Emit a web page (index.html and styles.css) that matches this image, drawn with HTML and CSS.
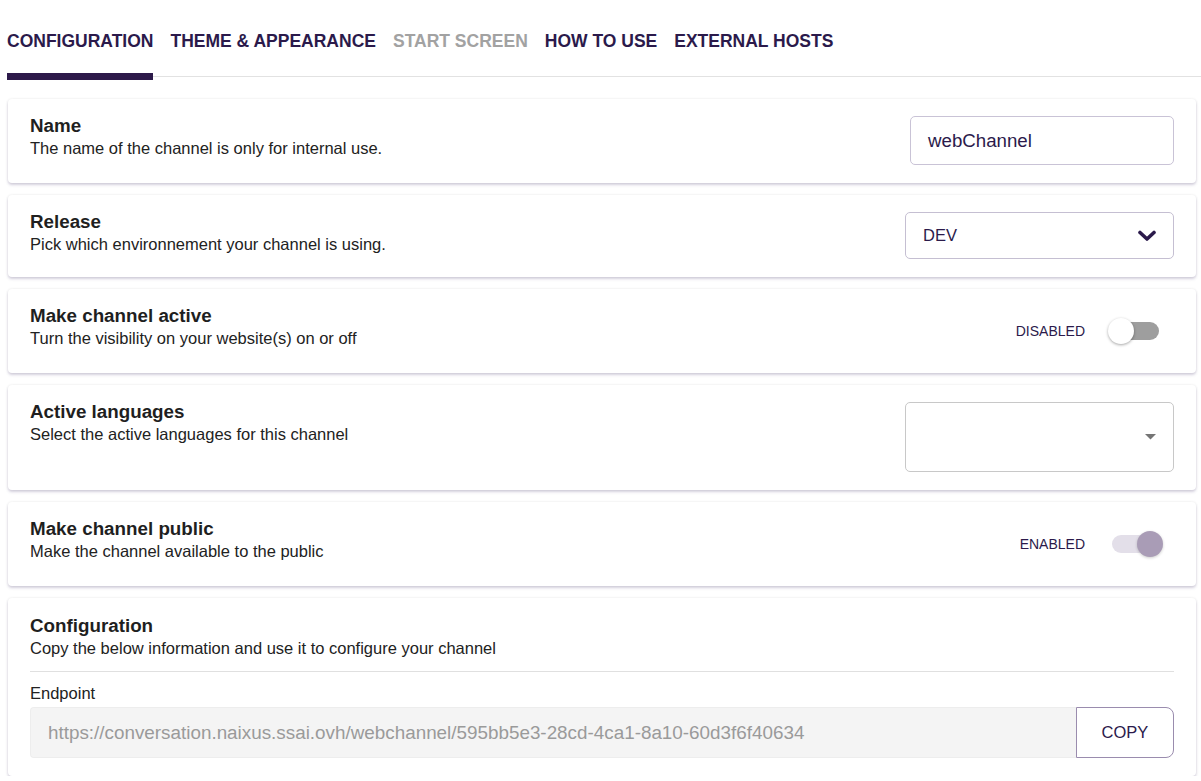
FILE: index.html
```html
<!DOCTYPE html>
<html lang="en">
<head>
    <meta charset="UTF-8">
    <meta name="viewport" content="width=device-width, initial-scale=1.0">
    <title>Channel settings</title>
    <link rel="stylesheet" href="styles.css">
</head>
<body>
    <div class="page">
        <!-- Tabs -->
        <div class="tabs">
            <div class="tab active">CONFIGURATION</div>
            <div class="tab">THEME &amp; APPEARANCE</div>
            <div class="tab disabled">START SCREEN</div>
            <div class="tab">HOW TO USE</div>
            <div class="tab">EXTERNAL HOSTS</div>
        </div>

        <div class="cards">
            <!-- Name -->
            <div class="card">
                <div class="card-text">
                    <div class="card-title">Name</div>
                    <div class="card-desc">The name of the channel is only for internal use.</div>
                </div>
                <div class="text-input">webChannel</div>
            </div>

            <!-- Release -->
            <div class="card">
                <div class="card-text">
                    <div class="card-title">Release</div>
                    <div class="card-desc">Pick which environnement your channel is using.</div>
                </div>
                <div class="select release-select">
                    <span>DEV</span>
                    <svg width="18" height="12" viewBox="0 0 18 12"><polyline points="2,2.5 9,9 16,2.5" fill="none" stroke="#2b1a4b" stroke-width="3.6" stroke-linecap="round" stroke-linejoin="round"/></svg>
                </div>
            </div>

            <!-- Make channel active -->
            <div class="card">
                <div class="card-text">
                    <div class="card-title">Make channel active</div>
                    <div class="card-desc">Turn the visibility on your website(s) on or off</div>
                </div>
                <div class="switch-group">
                    <span class="switch-label">DISABLED</span>
                    <div class="switch">
                        <div class="switch-track"></div>
                        <div class="switch-thumb"></div>
                    </div>
                </div>
            </div>

            <!-- Active languages -->
            <div class="card">
                <div class="card-text">
                    <div class="card-title">Active languages</div>
                    <div class="card-desc">Select the active languages for this channel</div>
                </div>
                <div class="select lang-select">
                    <svg width="11" height="6" viewBox="0 0 11 6"><polygon points="0,0 11,0 5.5,5.5" fill="#757575"/></svg>
                </div>
            </div>

            <!-- Make channel public -->
            <div class="card">
                <div class="card-text">
                    <div class="card-title">Make channel public</div>
                    <div class="card-desc">Make the channel available to the public</div>
                </div>
                <div class="switch-group">
                    <span class="switch-label">ENABLED</span>
                    <div class="switch on">
                        <div class="switch-track"></div>
                        <div class="switch-thumb"></div>
                    </div>
                </div>
            </div>

            <!-- Configuration -->
            <div class="card card-column">
                <div class="card-title">Configuration</div>
                <div class="card-desc">Copy the below information and use it to configure your channel</div>
                <hr class="divider">
                <div class="field-label">Endpoint</div>
                <div class="copy-field">
                    <div class="copy-value">https://conversation.naixus.ssai.ovh/webchannel/595bb5e3-28cd-4ca1-8a10-60d3f6f40634</div>
                    <button class="copy-button">COPY</button>
                </div>
            </div>
        </div>
    </div>
</body>
</html>
```

FILE: styles.css
```css
body {
    margin: 0;
    background-color: #ffffff;
    font-family: "Liberation Sans", Arial, sans-serif;
    color: #212121;
}

.page {
    padding: 0 5px 0 8px;
}

/* Tabs */
.tabs {
    display: flex;
    gap: 17px;
    margin-left: -1px;
    margin-right: -5px;
    border-bottom: 1px solid #e2e2e2;
}

.tab {
    padding: 31px 0 22px;
    line-height: 20px;
    font-size: 17.5px;
    font-weight: bold;
    color: #2b1a4b;
    border-bottom: 7px solid transparent;
    margin-bottom: -4px;
    cursor: pointer;
}

.tab.active {
    border-bottom-color: #2d1a4a;
}

.tab.disabled {
    color: #a2a2a2;
}

/* Cards */
.cards {
    display: flex;
    flex-direction: column;
    gap: 12px;
    margin-top: 22px;
}

.card {
    display: flex;
    justify-content: space-between;
    align-items: center;
    background-color: #ffffff;
    border-radius: 4px;
    padding: 17px 22px 18px;
    box-shadow: 0 2px 3px rgba(70, 50, 110, 0.22), 0 0 3px rgba(0, 0, 0, 0.08);
}

.card-text {
    align-self: flex-start;
    margin-top: -2px;
}

.card-title {
    font-size: 18.8px;
    font-weight: bold;
    line-height: 23px;
    color: #1f1f1f;
}

.card-desc {
    font-size: 16.5px;
    line-height: 23px;
    color: #222222;
}

.text-input {
    box-sizing: border-box;
    width: 264px;
    height: 49px;
    padding: 0 17px;
    border: 1px solid #c9c3d6;
    border-radius: 5px;
    font-size: 18.7px;
    line-height: 47px;
    color: #2b1a4b;
}

.select {
    box-sizing: border-box;
    width: 269px;
    display: flex;
    align-items: center;
    justify-content: space-between;
    border-radius: 5px;
}

.release-select {
    height: 47px;
    padding: 0 17px;
    border: 1px solid #c5bfd2;
    font-size: 16.5px;
    color: #2b1a4b;
}

.lang-select {
    height: 70px;
    padding: 0 17px;
    border: 1px solid #c8c8c8;
    justify-content: flex-end;
}

/* Switches */
.switch-group {
    display: flex;
    align-items: center;
    height: 49px;
}

.switch-label {
    font-size: 14px;
    color: #2b1a4b;
}

.switch {
    position: relative;
    width: 55px;
    height: 49px;
    margin: 0 11px 0 23px;
}

.switch-track {
    position: absolute;
    left: 4px;
    top: 16px;
    width: 47px;
    height: 18px;
    border-radius: 9px;
    background-color: #9e9e9e;
}

.switch-thumb {
    position: absolute;
    left: 0;
    top: 12px;
    width: 26px;
    height: 26px;
    border-radius: 50%;
    background-color: #ffffff;
    box-shadow: 0 1px 3px rgba(0, 0, 0, 0.35);
}

.switch.on .switch-track {
    background-color: #e3dfe9;
}

.switch.on .switch-thumb {
    left: 29px;
    background-color: #a99cb6;
    box-shadow: 0 1px 3px rgba(0, 0, 0, 0.2);
}

/* Configuration block */
.card-column {
    display: block;
    padding-top: 16px;
    padding-bottom: 18px;
}

.divider {
    border: none;
    border-top: 1px solid #e0e0e0;
    margin: 11px 0 10px;
}

.field-label {
    font-size: 16.5px;
    line-height: 23px;
    color: #222222;
    margin-bottom: 2px;
}

.copy-field {
    display: flex;
    height: 51px;
}

.copy-value {
    flex: 1;
    box-sizing: border-box;
    padding: 0 17px;
    background-color: #f4f4f4;
    border: 1px solid #ededed;
    border-right: none;
    border-radius: 4px 0 0 4px;
    font-size: 18.85px;
    line-height: 49px;
    color: #9a9a9a;
    white-space: nowrap;
    overflow: hidden;
}

.copy-button {
    width: 98px;
    background-color: #ffffff;
    border: 1px solid #9a8cae;
    border-radius: 0 8px 8px 0;
    font-family: "Liberation Sans", Arial, sans-serif;
    font-size: 16.5px;
    color: #2b1a4b;
    cursor: pointer;
}
```
